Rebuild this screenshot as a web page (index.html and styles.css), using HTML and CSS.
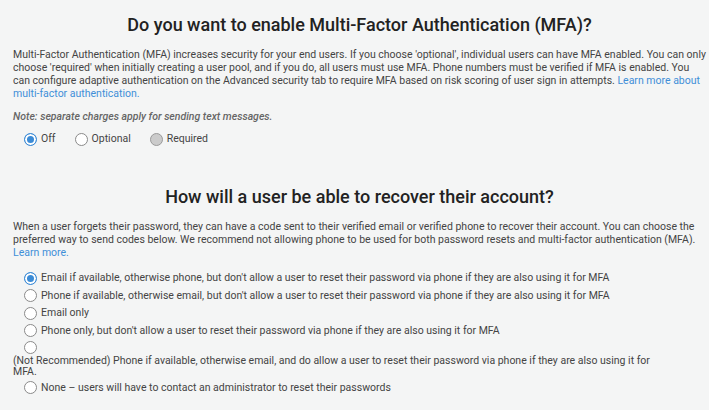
FILE: index.html
```html
<!DOCTYPE html>
<html>
<head>
<meta charset="utf-8">
<link rel="stylesheet" href="styles.css">
</head>
<body>
<div class="page">
  <section class="section">
    <h2 class="title">Do you want to enable Multi-Factor Authentication (MFA)?</h2>
    <p class="desc">Multi-Factor Authentication (MFA) increases security for your end users. If you choose 'optional', individual users can have MFA enabled. You can only choose 'required' when initially creating a user pool, and if you do, all users must use MFA. Phone numbers must be verified if MFA is enabled. You can configure adaptive authentication on the Advanced security tab to require MFA based on risk scoring of user sign in attempts. <a class="link" href="#">Learn more about <span class="nowrap">multi-factor</span> authentication.</a></p>
    <p class="note">Note: separate charges apply for sending text messages.</p>
    <div class="inline-radios">
      <label class="opt"><span class="radio checked"></span><span>Off</span></label>
      <label class="opt"><span class="radio"></span><span>Optional</span></label>
      <label class="opt"><span class="radio disabled"></span><span>Required</span></label>
    </div>
  </section>
  <section class="section second">
    <h2 class="title">How will a user be able to recover their account?</h2>
    <p class="desc">When a user forgets their password, they can have a code sent to their verified email or verified phone to recover their account. You can choose the preferred way to send codes below. We recommend not allowing phone to be used for both password resets and <span class="nowrap">multi-factor</span> authentication (MFA). <a class="link" href="#">Learn more.</a></p>
    <div class="list-radios">
      <label class="row"><span class="radio checked"></span><span>Email if available, otherwise phone, but don't allow a user to reset their password via phone if they are also using it for MFA</span></label>
      <label class="row"><span class="radio"></span><span>Phone if available, otherwise email, but don't allow a user to reset their password via phone if they are also using it for MFA</span></label>
      <label class="row"><span class="radio"></span><span>Email only</span></label>
      <label class="row"><span class="radio"></span><span>Phone only, but don't allow a user to reset their password via phone if they are also using it for MFA</span></label>
      <label class="row wrap"><span class="radio"></span><span class="wrap-text">(Not Recommended) Phone if available, otherwise email, and do allow a user to reset their password via phone if they are also using it for MFA.</span></label>
      <label class="row"><span class="radio"></span><span>None – users will have to contact an administrator to reset their passwords</span></label>
    </div>
  </section>
</div>
</body>
</html>
```
FILE: styles.css
```css
html, body {
  margin: 0;
  padding: 0;
  background: #f4f5f5;
}
body {
  font-family: Roboto, "Liberation Sans", sans-serif;
  color: #444;
  font-size: 10.5px;
}
.page {
  padding: 10px 3px 0 13px;
}
.title {
  margin: 0;
  text-align: center;
  font-size: 18px;
  font-weight: 500;
  color: #222;
  line-height: 30px;
}
.desc {
  margin: 8px 0 0;
  line-height: 13px;
}
.nowrap {
  white-space: nowrap;
}
.link {
  color: #3f8fd8;
  text-decoration: none;
}
.note {
  margin: 10px 0 0;
  font-style: italic;
  font-weight: 500;
  color: #666;
  line-height: 13px;
}
.inline-radios {
  display: flex;
  gap: 19px;
  margin: 9px 0 0 11px;
}
.opt, .row {
  display: flex;
  align-items: center;
  gap: 4px;
  line-height: 14px;
}
.radio {
  width: 11px;
  height: 11px;
  border: 1px solid #8a8a8a;
  border-radius: 50%;
  background: #fff;
  flex: none;
  box-sizing: content-box;
}
.radio.checked {
  border-color: #3b8bd6;
  background: #3b8bd6;
  box-shadow: inset 0 0 0 2px #fff;
}
.radio.disabled {
  background: #cbcbcb;
  border-color: #9a9a9a;
}
.second {
  margin-top: 36px;
}
.list-radios {
  margin: 12px 0 0 11px;
  display: flex;
  flex-direction: column;
  gap: 3.5px;
}
.row.wrap {
  flex-direction: column;
  align-items: flex-start;
  gap: 0;
}
.wrap-text {
  margin: 1px 0 0 -11px;
  max-width: 660px;
  line-height: 11px;
}
```
